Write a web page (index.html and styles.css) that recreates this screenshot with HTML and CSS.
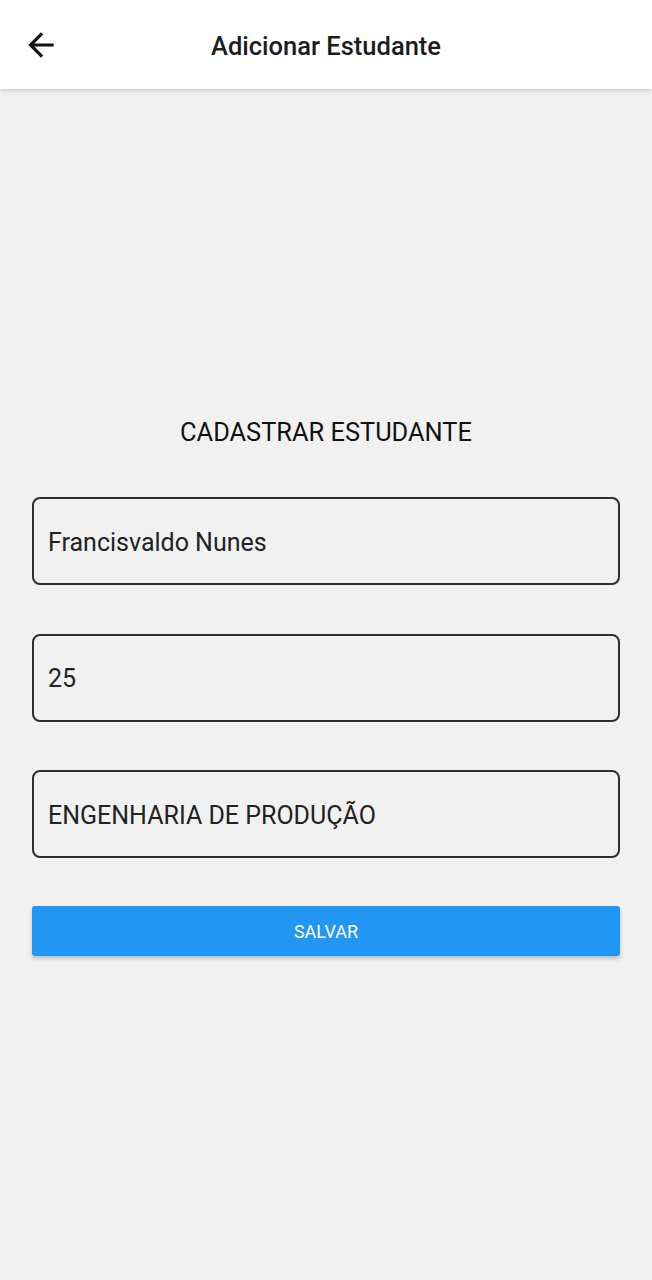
FILE: index.html
```html
<!DOCTYPE html>
<html lang="pt">
<head>
<meta charset="utf-8">
<link rel="stylesheet" href="styles.css">
</head>
<body>
<header class="appbar">
  <button class="back" aria-label="Voltar">
    <svg width="38" height="38" viewBox="0 0 24 24"><path d="M20 11H7.83l5.59-5.59L12 4l-8 8 8 8 1.41-1.41L7.83 13H20v-2z" fill="#111"/></svg>
  </button>
  <h1 class="title">Adicionar Estudante</h1>
</header>
<main class="content">
  <h2 class="heading">CADASTRAR ESTUDANTE</h2>
  <div class="field">Francisvaldo Nunes</div>
  <div class="field">25</div>
  <div class="field">ENGENHARIA DE PRODUÇÃO</div>
  <button class="save">SALVAR</button>
</main>
</body>
</html>
```
FILE: styles.css
```css
html, body { margin: 0; padding: 0; }
body {
  background: #f1f1f1;
  font-family: Roboto, "Noto Sans", sans-serif;
  color: #1b1b1b;
  width: 652px;
  height: 1280px;
  overflow: hidden;
}
.appbar {
  height: 89px;
  background: #fff;
  display: flex;
  align-items: center;
  position: relative;
  box-shadow: 0 2px 4px rgba(0,0,0,0.14);
}
.back {
  position: absolute;
  left: 22px;
  top: 26px;
  border: 0;
  background: none;
  padding: 0;
  width: 38px;
  height: 38px;
}
.back svg { display: block; }
.title {
  flex: 1;
  text-align: center;
  margin: 0;
  font-size: 25.5px;
  font-weight: 500;
  color: #1c1c1c;
  padding-top: 3px;
}
.content {
  display: flex;
  flex-direction: column;
  padding: 0 32px;
}
.heading {
  margin: 328px 0 0;
  height: 30px;
  line-height: 30px;
  text-align: center;
  font-size: 25.4px;
  font-weight: 400;
  color: #111;
}
.field {
  box-sizing: border-box;
  margin-top: 48.5px;
  height: 88px;
  border: 2px solid #2e2e2e;
  border-radius: 8px;
  display: flex;
  align-items: center;
  padding-left: 14px;
  padding-top: 2px;
  font-size: 25px;
  color: #222;
}
.heading + .field { margin-top: 50px; }
.save {
  margin-top: 48px;
  height: 50px;
  border: 0;
  border-radius: 3px;
  background: #2196f3;
  color: #fff;
  font-family: Roboto, sans-serif;
  font-size: 18px;
  font-weight: 400;
  box-shadow: 0 3px 4px rgba(0,0,0,0.2);
}
```
